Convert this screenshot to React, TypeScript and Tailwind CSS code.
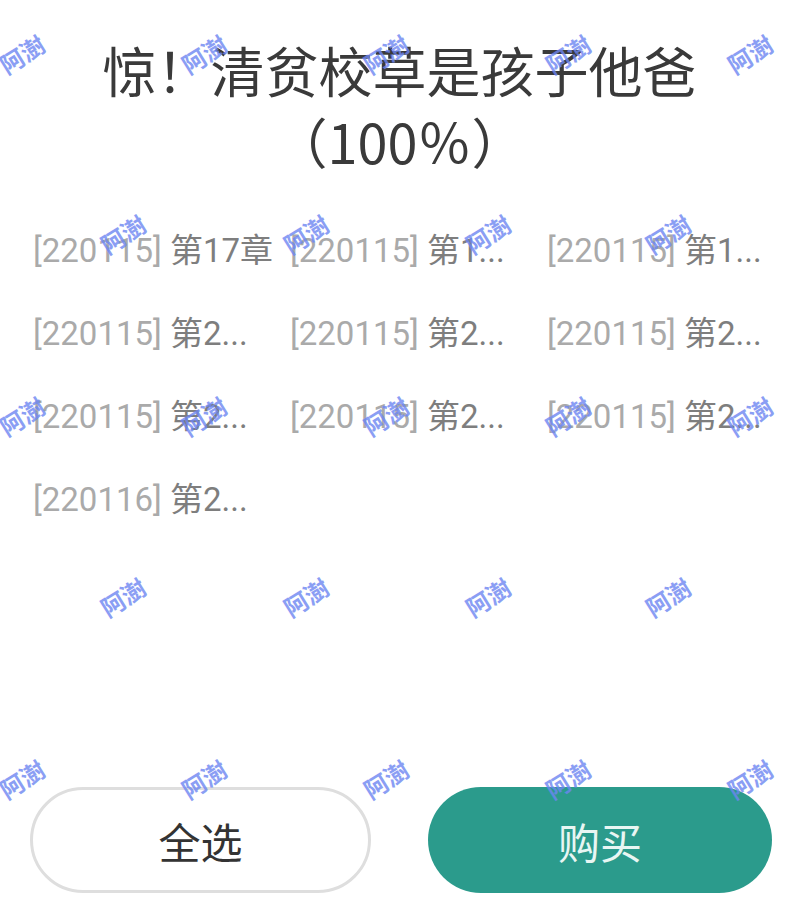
import React from "react";

const FONT = { fontFamily: 'Roboto, "Noto Sans CJK SC", sans-serif' };
const CJK = { fontFamily: '"Noto Sans CJK SC", "Noto Sans", sans-serif' };

type Item = { id: string; ch: string };
const items: Item[] = [
  { id: "[220115]", ch: "第17章" },
  { id: "[220115]", ch: "第1..." },
  { id: "[220115]", ch: "第1..." },
  { id: "[220115]", ch: "第2..." },
  { id: "[220115]", ch: "第2..." },
  { id: "[220115]", ch: "第2..." },
  { id: "[220115]", ch: "第2..." },
  { id: "[220115]", ch: "第2..." },
  { id: "[220115]", ch: "第2..." },
  { id: "[220116]", ch: "第2..." },
];

const marks: [number, number][] = [];
const rowsY = [55, 235, 417, 598, 780];
rowsY.forEach((y, i) => {
  const xs = i % 2 === 0 ? [24, 206, 388, 570, 752] : [125, 308, 490, 670];
  xs.forEach((x) => marks.push([x, y]));
});

export default function App() {
  return (
    <div className="relative w-[799px] h-[923px] bg-white overflow-hidden flex flex-col" style={FONT}>
      <div
        className="pt-[34px] text-center text-[54px] leading-[71px] text-[#3a3a3a]"
        style={CJK}
      >
        <div>惊！清贫校草是孩子他爸</div>
        <div>（100％）</div>
      </div>

      <div className="mt-[33px] pl-[33px] grid grid-cols-[257px_257px_257px]">
        {items.map((it, i) => (
          <div key={i} className="h-[83px] flex items-center whitespace-nowrap overflow-hidden text-[33px]">
            <span className="text-[#aaaaaa]">{it.id}</span>
            <span className="text-[#7e7e7e]">&nbsp;{it.ch}</span>
          </div>
        ))}
      </div>

      <div className="mt-auto pb-[30px] pl-[30px] flex gap-[57px]">
        <button
          className="w-[341px] h-[106px] rounded-full border-[3px] border-[#dedede] bg-white text-[42px] text-[#333333] flex items-center justify-center"
          style={CJK}
        >
          全选
        </button>
        <button
          className="w-[344px] h-[106px] rounded-full bg-[#2b9b8c] text-[42px] text-[#e8f6f3] flex items-center justify-center"
          style={CJK}
        >
          购买
        </button>
      </div>

      {marks.map(([x, y], i) => (
        <div
          key={i}
          className="absolute pointer-events-none text-[24px] leading-none font-bold text-[#6d86f2] opacity-80 -rotate-[32deg] whitespace-nowrap"
          style={{ left: x - 26, top: y - 13, ...CJK }}
        >
          阿澍
        </div>
      ))}
    </div>
  );
}
